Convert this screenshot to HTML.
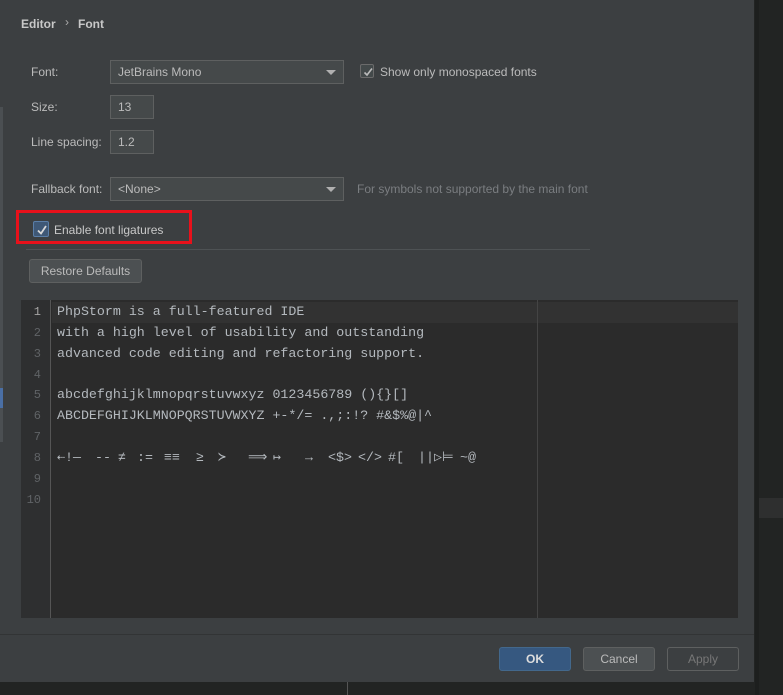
<!DOCTYPE html>
<html><head><meta charset="utf-8"><style>
*{margin:0;padding:0;box-sizing:border-box}
body{width:783px;height:695px;background:#222423;position:relative;overflow:hidden;font-family:"Liberation Sans",sans-serif;font-size:12px;color:#bbbbbb}
.dlg{position:absolute;left:0;top:0;width:754px;height:682px;background:#3c3f41}
.a{position:absolute}
.lbl{position:absolute;font-size:12px;color:#bbb}
.box{position:absolute;border:1px solid #5e6060;background:#45494a;color:#bbb;padding-left:7px;line-height:22px;font-size:12px}
.arrow{position:absolute;right:7px;top:9px;width:0;height:0;border-left:5px solid transparent;border-right:5px solid transparent;border-top:5px solid #b0b0b0}
.cb{position:absolute;width:14px;height:14px;border:1px solid #6b6b6b;background:#43494a;border-radius:2px}
.cb svg{position:absolute;left:1px;top:1px}
.ed{position:absolute;left:21px;top:300px;width:717px;height:318px;background:#2b2b2b}
.gut{position:absolute;left:0;top:0;width:30px;height:318px;background:#2e2f30;border-right:1px solid #555}
.code{position:absolute;font-family:"Liberation Mono",monospace;font-size:13.3px;color:#b4b9be;white-space:pre}
.ln{position:absolute;left:0;width:20px;text-align:right;font-family:"Liberation Mono",monospace;font-size:12px;color:#606366}
.btn{position:absolute;height:24px;border:1px solid #5e6060;border-radius:3px;background:#4c5052;color:#bbb;text-align:center;line-height:22px;font-size:12px}
</style></head><body>
<div class="a" style="left:755px;top:0;width:4px;height:695px;background:#1d1f1e"></div>
<div class="a" style="left:759px;top:498px;width:24px;height:20px;background:#2e2f2f"></div>
<div class="a" style="left:347px;top:682px;width:1px;height:13px;background:#555"></div>
<div class="dlg">
<div class="a" style="left:0;top:107px;width:3px;height:335px;background:#4b4f52"></div>
<div class="a" style="left:0;top:388px;width:3px;height:20px;background:#4a6fa5"></div>
<div class="a" style="left:21px;top:17px;font-weight:bold;color:#c8c8c8;font-size:12px">Editor</div>
<div class="a" style="left:65px;top:15px;color:#aaa;font-size:12px">›</div>
<div class="a" style="left:78px;top:17px;font-weight:bold;color:#c8c8c8;font-size:12px">Font</div>

<div class="lbl" style="left:31px;top:65px">Font:</div>
<div class="box" style="left:110px;top:60px;width:234px;height:24px">JetBrains Mono<div class="arrow"></div></div>
<div class="cb" style="left:360px;top:64px"><svg width="12" height="12"><path d="M2.5 6.5 L5 9 L10 2.5" stroke="#bbb" stroke-width="1.6" fill="none"/></svg></div>
<div class="lbl" style="left:380px;top:65px">Show only monospaced fonts</div>

<div class="lbl" style="left:31px;top:100px">Size:</div>
<div class="box" style="left:110px;top:95px;width:44px;height:24px">13</div>
<div class="lbl" style="left:31px;top:135px">Line spacing:</div>
<div class="box" style="left:110px;top:130px;width:44px;height:24px">1.2</div>

<div class="lbl" style="left:31px;top:182px">Fallback font:</div>
<div class="box" style="left:110px;top:177px;width:234px;height:24px">&lt;None&gt;<div class="arrow"></div></div>
<div class="lbl" style="left:357px;top:182px;color:#7a7d80">For symbols not supported by the main font</div>

<div class="a" style="left:16px;top:210px;width:176px;height:34px;border:3px solid #e8111b"></div>
<div class="cb" style="left:33px;top:221px;border-color:#5a7ea8;background:#3f5876;width:16px;height:16px"><svg width="14" height="14"><path d="M3 7.5 L6 10.5 L11 3" stroke="#d8d8d8" stroke-width="1.8" fill="none"/></svg></div>
<div class="lbl" style="left:54px;top:223px;color:#c8c8c8">Enable font ligatures</div>
<div class="a" style="left:26px;top:249px;width:564px;height:1px;background:#4e5254"></div>

<div class="btn" style="left:29px;top:259px;width:113px">Restore Defaults</div>

<div class="ed">
<div class="gut"></div>
<div class="a" style="left:31px;top:2px;width:686px;height:21px;background:#323232"></div>
<div class="a" style="left:516px;top:0;width:1px;height:318px;background:#444"></div>
<div class="ln" style="top:5px;color:#a4a3a3">1</div>
<div class="ln" style="top:26px">2</div>
<div class="ln" style="top:47px">3</div>
<div class="ln" style="top:68px">4</div>
<div class="ln" style="top:88px">5</div>
<div class="ln" style="top:109px">6</div>
<div class="ln" style="top:130px">7</div>
<div class="ln" style="top:151px">8</div>
<div class="ln" style="top:172px">9</div>
<div class="ln" style="top:193px">10</div>
<div class="code" style="left:36px;top:4px">PhpStorm is a full-featured IDE</div>
<div class="code" style="left:36px;top:25px">with a high level of usability and outstanding</div>
<div class="code" style="left:36px;top:46px">advanced code editing and refactoring support.</div>
<div class="code" style="left:36px;top:87px">abcdefghijklmnopqrstuvwxyz 0123456789 (){}[]</div>
<div class="code" style="left:36px;top:108px">ABCDEFGHIJKLMNOPQRSTUVWXYZ +-*/= .,;:!? #&amp;$%@|^</div>
<div class="code" style="left:36px;top:150px">⇠!—</div>
<div class="code" style="left:74px;top:150px">--</div>
<div class="code" style="left:97px;top:150px">≠</div>
<div class="code" style="left:116px;top:150px">:=</div>
<div class="code" style="left:143px;top:150px">≡≡</div>
<div class="code" style="left:175px;top:150px">≥</div>
<div class="code" style="left:197px;top:150px">≻</div>
<div class="code" style="left:227px;top:150px">⟹</div>
<div class="code" style="left:252px;top:150px">↦</div>
<div class="code" style="left:284px;top:150px">→</div>
<div class="code" style="left:307px;top:150px">&lt;$&gt;</div>
<div class="code" style="left:337px;top:150px">&lt;/&gt;</div>
<div class="code" style="left:367px;top:150px">#[</div>
<div class="code" style="left:397px;top:150px">||▷</div>
<div class="code" style="left:421px;top:150px">⊨</div>
<div class="code" style="left:439px;top:150px">~@</div>
</div>

<div class="a" style="left:0;top:634px;width:754px;height:1px;background:#323435"></div>
<div class="btn" style="left:499px;top:647px;width:72px;background:#365880;border-color:#43688c;color:#ddd;font-weight:bold">OK</div>
<div class="btn" style="left:583px;top:647px;width:72px">Cancel</div>
<div class="btn" style="left:667px;top:647px;width:72px;background:#3c3f41;color:#777">Apply</div>
</div>
</body></html>
